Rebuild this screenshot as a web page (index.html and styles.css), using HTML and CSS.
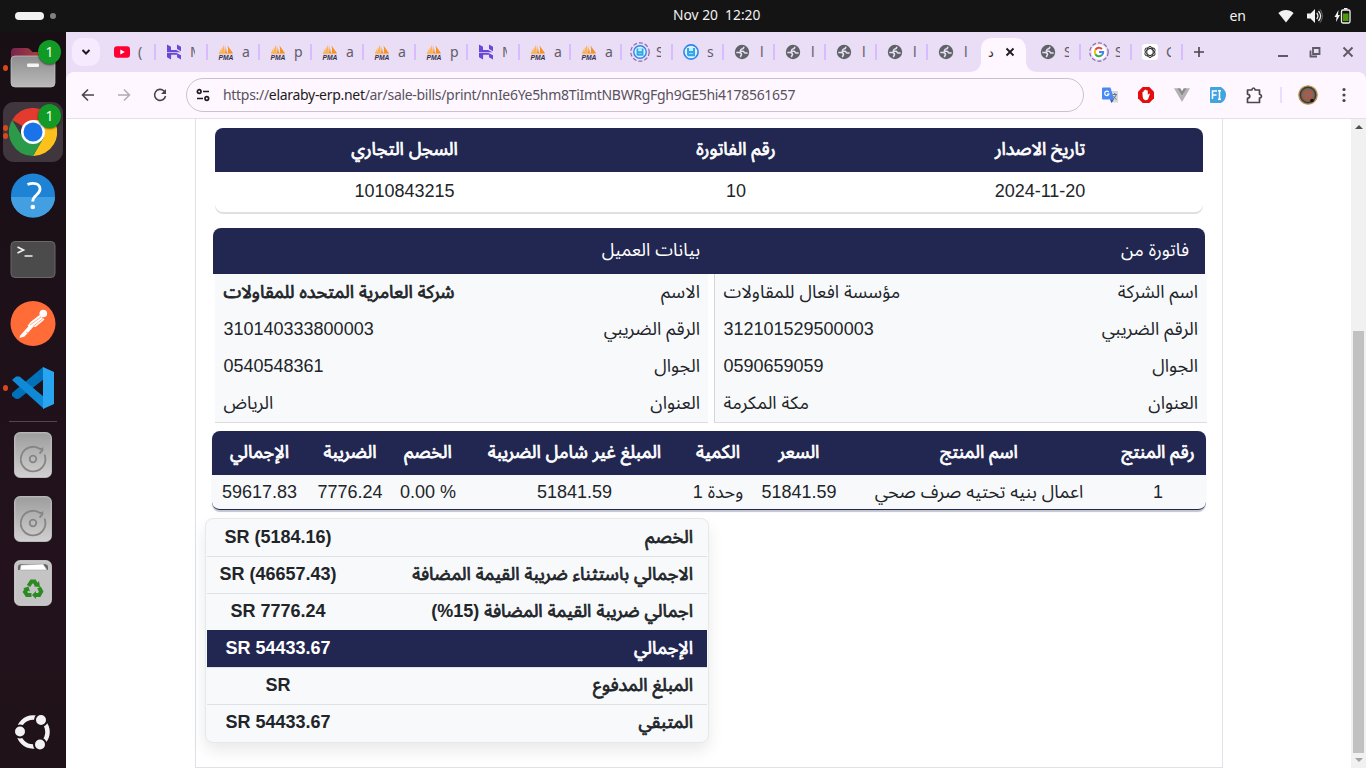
FILE: index.html
```html
<!DOCTYPE html>
<html lang="ar">
<head>
<meta charset="utf-8">
<title>فاتورة</title>
<link rel="stylesheet" href="styles.css">
</head>
<body>
<svg class="defs" width="0" height="0">
  <symbol id="pma" viewBox="0 0 16 16"><path d="M6 1L2 9.500h5zM4 3L.8 9.300h1.400z" fill="#fbb450"/><path d="M7 .5c1 3 .5 6-.2 9h2.400zM9.500 1.500l5.500 7.800-5.500.5c.8-3 .7-5 0-8.300z" fill="#f79025"/><path d="M1 9.800h14" stroke="#e9b070" stroke-width=".8"/><text x="8" y="15.600" text-anchor="middle" textLength="15" lengthAdjust="spacingAndGlyphs" class="pma-text">PMA</text></symbol>
  <symbol id="host" viewBox="0 0 16 16"><path d="M1 .5l4 2.200V6h5.200L14.500 8.300H1zM11 .5l4 2.200V7.300l-4-2.200zM1 9h9.500l4.500 2.300v4.200l-4-2.200v-2.500H5.200L5 15.500 1 13.300z" fill="#6a48d7"/></symbol>
  <symbol id="globe" viewBox="0 0 16 16"><circle cx="8" cy="8" r="7.200" fill="#5f6368"/><path d="M9.800 2.800c0 2-1 2.300-2.500 2.400-.9.100-.3 1.900-1.600 2.100H9c1.100 0 1 1.700 2 1.700h2.600M2.300 8.600h2.900c1.300.2 2.300.6 2.300 1.800 0 1-1 .9-1 2.800" fill="none" stroke="#eaddf6" stroke-width="1.500"/></symbol>
  <symbol id="disk" viewBox="0 0 16 16"><circle cx="8" cy="8" r="7.100" fill="#e3effd" stroke="#2c85ee" stroke-width="1.600"/><path d="M4 4h8v8.200H5L4 11z" fill="#2ca9e6"/><path d="M6 4h4v3H6zM6 9.300h4v.7H6z" fill="#c8ecfa"/></symbol>
  <symbol id="drive" viewBox="0 0 38 46"><rect x=".7" y=".7" width="36.600" height="44.600" rx="5" fill="url(#gd)" stroke="#d4d4d4"/><path d="M30.500 22.500a12.300 12.300 0 1 1-4-5.200l1.800-.8.200 2-3 3" fill="none" stroke="#858585" stroke-width="1.800"/><circle cx="19" cy="27" r="3.300" fill="none" stroke="#858585" stroke-width="1.800"/></symbol>
  <linearGradient id="gd" x2="0" y2="1"><stop stop-color="#9d9d9d"/><stop offset="1" stop-color="#d0d0d0"/></linearGradient>
  <linearGradient id="gf" x2="0" y2="1"><stop stop-color="#8e8e8e"/><stop offset="1" stop-color="#bababa"/></linearGradient>
  <linearGradient id="gh" x2="1"><stop stop-color="#77244f"/><stop offset="1" stop-color="#c34c35"/></linearGradient>
</svg>
<header class="topbar">
  <span class="pill"></span><span class="dot"></span>
  <span class="clock">Nov 20&nbsp; 12:20</span>
  <span class="lang">en</span>
  <svg class="wifi" width="16" height="14" viewBox="0 0 16 14"><path d="M8 13.500L.4 4C4.500-.1 11.500-.1 15.600 4z" fill="#f2f2f2"/></svg>
  <svg class="vol" width="17" height="16" viewBox="0 0 17 16"><path d="M1 5.500h3.500L9 1v14l-4.500-4.500H1z" fill="#f2f2f2"/><path d="M10.700 5c1.500 1.800 1.500 4.200 0 6M12.500 3c2.500 3 2.500 7 0 10" fill="none" stroke="#f2f2f2" stroke-width="1.200"/><path d="M14 1.300c3 4 3 9.400 0 13.400" fill="none" stroke="#777"/></svg>
  <svg class="bat" width="17" height="16" viewBox="0 0 17 16"><path d="M4.500 2L.5 9h2l-.5 5 4-7H4z" fill="#f2f2f2"/><rect x="7.500" y="2" width="8.500" height="13" rx="1.500" fill="#141414" stroke="#f2f2f2" stroke-width="1.300"/><path d="M10 .7h3.500" stroke="#f2f2f2" stroke-width="1.400"/><path d="M9 5.500h5.500V13H9z" fill="#4e9a06"/></svg>
</header>
<div class="main">
<nav class="dock">
  <div class="app"><i class="run"></i><svg width="46" height="46" viewBox="0 0 46 46"><path d="M1 30V7q0-4 4-4h12q2 0 3.500 2l2 2H40q4 0 4 4v20z" fill="url(#gh)"/><path d="M1 15q0-4 4-4h36q4 0 4 4v23q0 4-4 4H5q-4 0-4-4z" fill="url(#gf)" stroke="#c5c5c5" stroke-width=".7"/><rect x="17" y="18.500" width="12" height="3.500" rx="1.200" fill="#f5f5f5"/></svg><b class="badge">1</b></div>
  <div class="app active"><i class="run two"></i><svg width="48" height="48" viewBox="0 0 48 48"><path d="M24 24L3.200 12A24 24 0 0 1 44.800 12z" fill="#e33b2e"/><path d="M24 12h21A24 24 0 0 1 24 48L35 29z" fill="#fcc21b"/><path d="M3.200 12L14 30q5 8 21-1L24 48A24 24 0 0 1 3.200 12z" fill="#2b9a49"/><circle cx="24" cy="24" r="12" fill="#fff"/><circle cx="24" cy="24" r="9.500" fill="#1a73e8"/></svg><b class="badge">1</b></div>
  <div class="app"><svg width="46" height="46" viewBox="0 0 46 46"><circle cx="23" cy="22.500" r="22" fill="#1f83d5"/><path d="M1 24h44a22 20.500 0 0 1-44 0" fill="#42a0e2"/><path d="M17.500 11.500c6-2.500 12.500-1 12.500 4.500 0 6-7.300 6-7.300 12.500" fill="none" stroke="#fff" stroke-width="2.800"/><circle cx="22.800" cy="34" r="2.300" fill="#fff"/></svg></div>
  <div class="app"><svg width="46" height="46" viewBox="0 0 46 46"><rect x="1" y="4.500" width="44" height="36" rx="4" fill="#4b4b4b" stroke="#686868"/><path d="M7.500 10l6 3-6 3M14.500 19h8" fill="none" stroke="#f1f1f1" stroke-width="1.700"/></svg></div>
  <div class="app"><svg width="46" height="46" viewBox="0 0 46 46"><circle cx="23" cy="22.500" r="22.500" fill="#ff6c37"/><circle cx="33.300" cy="12.500" r="3.800" fill="#fff"/><path d="M29.500 14l5 4.500-9 7.500-8-1 3-4z" fill="#fff"/><path d="M25 24L14.500 35.500l-5 1.500.5-2.200L20.500 23z" fill="#fff"/><path d="M20 24l11-8M23 25.500l10-8M16 31l3 1" stroke="#ff9a75" stroke-width=".8"/></svg></div>
  <div class="app"><i class="run"></i><svg width="44" height="44" viewBox="0 0 44 44"><path d="M32 1L1 27v3l4 3 3-.2L33 13z" fill="#0071b8"/><path d="M1 14l4-3.500 3.500.1L33 31v12z" fill="#108ad6"/><path d="M32 1l11 5v32l-11 5z" fill="#29a4f1"/></svg></div>
  <hr>
  <div class="app"><svg width="38" height="46"><use href="#drive"/></svg></div>
  <div class="app"><svg width="38" height="46"><use href="#drive"/></svg></div>
  <div class="app"><svg width="38" height="46" viewBox="0 0 38 46"><rect x=".7" y=".7" width="36.600" height="44.600" rx="5" fill="#c4c4c4" stroke="#ddd"/><path d="M4 10V7q0-3 4-3h22q4 0 4 3v3z" fill="#666"/><path d="M6 10l1-5 22-1 4 6z" fill="#fff" stroke="#aaa" stroke-width=".6"/><g fill="none" stroke="#2b8a20" stroke-width="4"><path d="M14.500 26l3-4.500h3l2 3.500"/><path d="M25 27.500l2.200 4-2 3.500h-4"/><path d="M17.500 35h-4.500l-2-3 2-3.500"/></g><path d="M20 26.500l6 .5-1-6zM22 31v8l-4-4zM9 28.500l5.500-2 1.500 5z" fill="#2b8a20"/></svg></div>
  <div class="launcher"><svg width="38" height="38" viewBox="0 0 38 38"><circle cx="19" cy="19" r="14.500" fill="none" stroke="#f2f2f2" stroke-width="4.500"/><g fill="#f2f2f2" stroke="#20111a" stroke-width="2"><circle cx="6" cy="18.500" r="6"/><circle cx="27" cy="7" r="6"/><circle cx="26" cy="31.500" r="6"/></g></svg></div>
</nav>
<section class="browser">
<div class="tabs">
  <div class="search"><svg width="10" height="8" viewBox="0 0 10 8"><path d="M1.500 2L5 5.500 8.500 2" fill="none" stroke="#1d1b20" stroke-width="2"/></svg></div>
  <div class="tab w"><svg width="16" height="16" viewBox="0 0 16 16"><rect y="2.300" width="16" height="11.400" rx="3" fill="#f03"/><path d="M6.300 5.500v5l4.500-2.500z" fill="#fff"/></svg><span>(</span></div>
  <div class="tab w"><svg width="16" height="16"><use href="#host"/></svg><span class="cut">M</span></div>
  <div class="tab w"><svg width="16" height="16"><use href="#pma"/></svg><span>a</span></div>
  <div class="tab w"><svg width="16" height="16"><use href="#pma"/></svg><span>p</span></div>
  <div class="tab w"><svg width="16" height="16"><use href="#pma"/></svg><span>a</span></div>
  <div class="tab w"><svg width="16" height="16"><use href="#pma"/></svg><span>a</span></div>
  <div class="tab w"><svg width="16" height="16"><use href="#pma"/></svg><span>p</span></div>
  <div class="tab w"><svg width="16" height="16"><use href="#host"/></svg><span class="cut">M</span></div>
  <div class="tab"><svg width="16" height="16"><use href="#pma"/></svg><span>a</span></div>
  <div class="tab"><svg width="16" height="16"><use href="#pma"/></svg><span>a</span></div>
  <div class="tab"><svg class="big" width="20" height="20" viewBox="0 0 20 20"><circle cx="10" cy="10" r="9.200" fill="none" stroke="#8a6aa8" stroke-width="1.200" stroke-dasharray="4 2"/><use href="#disk" x="3" y="3" width="14" height="14"/></svg><span class="cut">S</span></div>
  <div class="tab"><svg width="16" height="16"><use href="#disk"/></svg><span>s</span></div>
  <div class="tab"><svg width="16" height="16"><use href="#globe"/></svg><span class="thin">l</span></div>
  <div class="tab"><svg width="16" height="16"><use href="#globe"/></svg><span class="thin">l</span></div>
  <div class="tab"><svg width="16" height="16"><use href="#globe"/></svg><span class="thin">l</span></div>
  <div class="tab"><svg width="16" height="16"><use href="#globe"/></svg><span class="thin">l</span></div>
  <div class="tab last"><svg width="16" height="16"><use href="#globe"/></svg><span class="thin">l</span></div>
  <div class="current"><svg class="shape" width="69" height="34" viewBox="0 0 69 34"><path d="M0 34q12 0 12-12V12Q12 0 24 0h21q12 0 12 12v10q0 12 12 12z" fill="#fef7ff"/></svg><span>د</span><svg width="10" height="10" viewBox="0 0 10 10"><path d="M1.500 1.500l7 7M8.500 1.500l-7 7" stroke="#1d1b20" stroke-width="1.800"/></svg></div>
  <div class="tab"><svg width="16" height="16"><use href="#globe"/></svg><span class="cut">S</span></div>
  <div class="tab"><svg class="big" width="20" height="20" viewBox="0 0 20 20"><circle cx="10" cy="10" r="9.200" fill="none" stroke="#8a6aa8" stroke-width="1.200" stroke-dasharray="4 2"/><circle cx="10" cy="10" r="7.500" fill="#fff"/><g fill="none" stroke-width="2"><path d="M13 7A4.200 4.200 0 0 0 6.400 7.800" stroke="#ea4335"/><path d="M6.400 7.800a4.200 4.200 0 0 0 0 4.400" stroke="#fbbc05"/><path d="M6.400 12.200a4.200 4.200 0 0 0 6.500.9" stroke="#34a853"/><path d="M12.900 13.100A4 4 0 0 0 14.200 10H10" stroke="#4285f4"/></g></svg><span class="cut">S</span></div>
  <div class="tab"><svg width="16" height="16" viewBox="0 0 16 16"><rect width="16" height="16" rx="3" fill="#fff"/><g fill="none" stroke="#222" stroke-width=".9"><ellipse cx="8" cy="8" rx="3.200" ry="5.600"/><ellipse cx="8" cy="8" rx="3.200" ry="5.600" transform="rotate(60 8 8)"/><ellipse cx="8" cy="8" rx="3.200" ry="5.600" transform="rotate(120 8 8)"/></g></svg><span class="cut">C</span></div>
  <svg class="plus" width="12" height="12" viewBox="0 0 12 12"><path d="M6 1v10M1 6h10" stroke="#49454e" stroke-width="1.600"/></svg>
  <div class="win">
    <svg width="10" height="12" viewBox="0 0 10 12"><path d="M0 10h10" stroke="#5f5a66" stroke-width="2"/></svg>
    <svg width="12" height="12" viewBox="0 0 12 12"><path d="M4 2h6.500v6H4zM1.500 4.500v6H8" fill="none" stroke="#5f5a66" stroke-width="1.800"/></svg>
    <svg width="12" height="12" viewBox="0 0 12 12"><path d="M1.500 1.500l9 9M10.500 1.500l-9 9" stroke="#5f5a66" stroke-width="1.900"/></svg>
  </div>
</div>
<div class="toolbar">
  <svg class="back" width="14" height="14" viewBox="0 0 14 14"><path d="M13 7H2M7 1.500L1.500 7 7 12.500" fill="none" stroke="#49454e" stroke-width="1.600"/></svg>
  <svg class="fwd" width="14" height="14" viewBox="0 0 14 14"><path d="M1 7h11M7 1.500L12.500 7 7 12.500" fill="none" stroke="#b0abb5" stroke-width="1.500"/></svg>
  <svg class="reload" width="14" height="14" viewBox="0 0 14 14"><path d="M12.500 8A5.500 5.500 0 1 1 11 3l1.500 1.500" fill="none" stroke="#49454e" stroke-width="1.600"/><path d="M13 1v5H8z" fill="#49454e"/></svg>
  <div class="omni"><svg width="14" height="14" viewBox="0 0 14 14"><g fill="none" stroke="#1d1b20" stroke-width="1.700"><circle cx="3.200" cy="3.500" r="1.800"/><path d="M7 3.500h6M1 10.500h6"/><circle cx="10.800" cy="10.500" r="1.800"/></g></svg><span class="url">https://<em>elaraby-erp.net</em>/ar/sale-bills/print/nnIe6Ye5hm8TiImtNBWRgFgh9GE5hi4178561657</span></div>
  <div class="exts">
    <svg width="16" height="16" viewBox="0 0 16 16"><path d="M6 4h9q1 0 1 1v10.500H9z" fill="#d5d8dc"/><path d="M0 1.500Q0 .5 1 .5h7.500L12 12.500H1q-1 0-1-1z" fill="#4889f4"/><path d="M8 12.500h4L9.500 16z" fill="#3158c4"/><path d="M6.800 5.200A2.200 2.200 0 1 0 7 7H5" fill="none" stroke="#fff" stroke-width="1.200"/><path d="M10.500 7.500H15M12.700 6v1.500M14 8q-1 3-3 4M11.500 9q1 2.500 3 3.500" fill="none" stroke="#65798d"/></svg>
    <svg width="16" height="16" viewBox="0 0 16 16"><path d="M4.700 0h6.600L16 4.700v6.600L11.300 16H4.700L0 11.300V4.700z" fill="#e40d0d"/><path d="M4.500 8V5q.8-1 1.300 0V3.500q.8-1 1.300 0V3q.8-1 1.400 0v.8q.8-1 1.300 0V8l1.300-1.500q1 0 .6 1L10 12.300q-3 2-5-.8z" fill="#fff"/></svg>
    <svg width="16" height="16" viewBox="0 0 16 16"><path d="M0 1.200h3.500L8 9l4.500-7.800H16L8 15z" fill="#b3b3b3"/><path d="M3.300 1.200h3L8 4.200l1.700-3h3L8 9z" fill="#8b8b8b"/></svg>
    <svg width="16" height="16" viewBox="0 0 16 16"><path d="M1 0h10q5 3 5 8t-5 8H1q-1 0-1-1V1q0-1 1-1z" fill="#41a3df"/><path d="M2.500 12V4h4.500M2.500 8h4M8 3.500q1.500 0 1.500 1.500v6q0 1.500-1.500 1.500M11 3.500q-1.500 0-1.500 1.500v6q0 1.500 1.500 1.500" fill="none" stroke="#fff" stroke-width="1.500"/></svg>
    <svg class="puz" width="17" height="17" viewBox="0 0 17 17"><path d="M1.500 3h4.300q.5-2 1.700-2t1.700 2h4.300v4.300q2 .5 2 1.900t-2 1.900v4.400h-12v-4.200q2.300-.5 2.300-2.100T1.500 7.100z" fill="none" stroke="#49454e" stroke-width="1.700" stroke-linejoin="round"/></svg>
  </div>
  <i class="vsep"></i>
  <svg class="avatar" width="20" height="20" viewBox="0 0 20 20"><circle cx="10" cy="10" r="9.300" fill="#6d6864" stroke="#c9993f" stroke-width="1.100"/><circle cx="10" cy="10" r="7.600" fill="none" stroke="#3d3736" stroke-width="1.300"/><circle cx="10" cy="10" r="5.200" fill="#b5543f"/><path d="M7 7l6 6M13 7l-6 6M10 5v10M5 10h10" stroke="#7d6f67" stroke-width=".9"/><circle cx="14" cy="15.500" r="1.800" fill="#191412"/></svg>
  <svg class="more" width="4" height="16" viewBox="0 0 4 16"><g fill="#49454e"><circle cx="2" cy="2.500" r="1.600"/><circle cx="2" cy="8" r="1.600"/><circle cx="2" cy="13.500" r="1.600"/></g></svg>
</div>
<div class="view">
<main class="page" dir="rtl">
<div class="invoice">
  <div class="info">
    <div class="head"><span>تاريخ الاصدار</span><span>رقم الفاتورة</span><span>السجل التجاري</span></div>
    <div class="line"><span>2024-11-20</span><span>10</span><span>1010843215</span></div>
  </div>
  <div class="parties-head"><span>فاتورة من</span><span>بيانات العميل</span></div>
  <div class="parties">
    <div class="party from">
      <p><span>اسم الشركة</span><span>مؤسسة افعال للمقاولات</span></p>
      <p><span>الرقم الضريبي</span><span>312101529500003</span></p>
      <p><span>الجوال</span><span>0590659059</span></p>
      <p><span>العنوان</span><span>مكة المكرمة</span></p>
    </div>
    <div class="party">
      <p><span>الاسم</span><strong>شركة العامرية المتحده للمقاولات</strong></p>
      <p><span>الرقم الضريبي</span><span>310140333800003</span></p>
      <p><span>الجوال</span><span>0540548361</span></p>
      <p><span>العنوان</span><span>الرياض</span></p>
    </div>
  </div>
  <div class="items">
    <div class="ihead"><span>رقم المنتج</span><span>اسم المنتج</span><span>السعر</span><span>الكمية</span><span>المبلغ غير شامل الضريبة</span><span>الخصم</span><span>الضريبة</span><span>الإجمالي</span></div>
    <div class="irow"><span>1</span><span>اعمال بنيه تحتيه صرف صحي</span><span>51841.59</span><span>وحدة 1</span><span>51841.59</span><span dir="ltr">0.00 %</span><span>7776.24</span><span>59617.83</span></div>
  </div>
  <div class="totals">
    <div class="rows">
    <p><span>الخصم</span><bdi dir="ltr">SR (5184.16)</bdi></p>
    <p><span>الاجمالي باستثناء ضريبة القيمة المضافة</span><bdi dir="ltr">SR (46657.43)</bdi></p>
    <p><span>اجمالي ضريبة القيمة المضافة <b>(15%)</b></span><bdi dir="ltr">SR 7776.24</bdi></p>
    <p class="grand"><span>الإجمالي</span><bdi dir="ltr">SR 54433.67</bdi></p>
    <p><span>المبلغ المدفوع</span><bdi dir="ltr">SR</bdi></p>
    <p><span>المتبقي</span><bdi dir="ltr">SR 54433.67</bdi></p>
    </div>
  </div>
</div>
</main>
<aside class="scroll"><i class="up"></i><i class="thumb"></i><i class="down"></i></aside>
</div>
</section>
</div>
</body>
</html>
```

FILE: styles.css
```css
* { box-sizing: border-box; }
body { margin: 0; width: 1366px; height: 768px; overflow: hidden; display: flex; flex-direction: column; background: #fff; font-family: "Noto Sans", sans-serif; }
svg { display: block; flex: none; }
.defs { position: absolute; }
p { margin: 0; }

.topbar { height: 32px; flex: none; background: #141414; color: #f2f2f2; display: flex; align-items: center; font-size: 13.8px; padding-right: 15px; }
.pill { width: 29px; height: 8px; border-radius: 4px; background: #f2f2f2; margin-left: 15px; }
.dot { width: 6px; height: 6px; border-radius: 50%; background: #808080; margin-left: 6px; }
.clock { margin-left: 617px; width: 92px; white-space: nowrap; line-height: 20px; padding-bottom: 2px; }
.lang { margin-left: auto; font-size: 14px; line-height: 20px; }
.wifi { margin-left: 32px; }
.vol { margin-left: 12px; }
.bat { margin-left: 11px; }

.main { flex: 1; display: flex; min-height: 0; }
.dock { width: 66px; flex: none; background: linear-gradient(#180f15, #20111a 55%, #23121d 75%, #1f1218); display: flex; flex-direction: column; align-items: center; padding-top: 6px; }
.app { width: 60px; height: 60px; margin-bottom: 4px; flex: none; border-radius: 11px; display: flex; align-items: center; justify-content: center; position: relative; }
.app.active { background: #40363e; }
.dock hr { width: 48px; height: 1px; border: 0; background: #514750; margin: -1px 0 3px; flex: none; }
.run { position: absolute; left: 0; top: 27px; width: 5px; height: 6px; border-radius: 50%; background: #d8481c; }
.run.two { top: 23px; box-shadow: 0 8px #d8481c; }
.badge { position: absolute; left: 35px; top: 2px; width: 23px; height: 24px; border-radius: 50%; background: #119a26; color: #f4ffe0; font: 14px/24px "Noto Sans", sans-serif; text-align: center; box-shadow: 0 1px 2px #0008; }
.launcher { margin-top: auto; margin-bottom: 17px; }

.browser { flex: 1; display: flex; flex-direction: column; min-width: 0; background: #eaddf6; }
.tabs { height: 40px; flex: none; display: flex; align-items: center; padding-left: 6px; }
.search { width: 28px; height: 28px; border-radius: 10px; background: #f6ebfe; display: flex; align-items: center; justify-content: center; margin-right: 4px; }
.tab { width: 51px; height: 16px; display: flex; align-items: center; padding-left: 10px; border-right: 2px solid #d9bcff; flex: none; font-size: 14px; line-height: 16px; color: #625b6b; }
.tab.w { width: 52px; }
.tab.last { border-color: transparent; }
.tab span { width: 8px; margin-left: 8px; white-space: nowrap; }
.tab .cut { width: 5px; overflow: hidden; }
.tab .thin { padding-left: 2px; }
.tab .big { margin: 0 -2px; }
.pma-text { font: italic bold 6.500px "Liberation Sans", sans-serif; fill: #33334d; }
.current { width: 51px; height: 28px; flex: none; position: relative; display: flex; align-items: center; padding-left: 9px; font: 13px "DejaVu Sans", sans-serif; color: #333; }
.current .shape { position: absolute; left: -10px; top: 0; }
.current span { position: relative; width: 7px; margin-right: 10px; }
.current > svg:last-child { position: relative; }
.plus { margin-left: 10px; }
.win { margin-left: auto; display: flex; align-items: center; gap: 21px; padding-right: 12px; }

.toolbar { height: 47px; flex: none; background: #fef7ff; border-bottom: 1px solid #e4dfe8; border-radius: 8px 8px 0 0; display: flex; align-items: center; padding-left: 15px; }
.fwd { margin-left: 22px; }
.reload { margin-left: 22px; }
.omni { width: 898px; height: 34px; margin-left: 19px; border: 1px solid #c8c2cc; border-radius: 17px; display: flex; align-items: center; padding-left: 9px; font-size: 14px; color: #58525e; white-space: nowrap; flex: none; }
.url { margin-left: 13px; letter-spacing: -.302px; padding-bottom: 2px; }
.url em { font-style: normal; color: #1d1b20; }
.exts { display: flex; gap: 20px; align-items: center; margin-left: 18px; }
.vsep { width: 2px; height: 16px; background: #ecdcff; margin-left: 17px; }
.avatar { margin-left: 16px; }
.more { margin-left: 24px; }

.view { flex: 1; display: flex; min-height: 0; background: #fff; }
.page { width: 1285px; flex: none; padding-right: 128px; display: flex; }
.invoice { width: 1028px; height: 649px; flex: none; border: 1px solid #dee2e6; border-top: 0; padding-top: 9px; font: 18px/24px "Liberation Sans", "Noto Sans Arabic", "Noto Sans", sans-serif; color: #212529; }
.info { width: 988px; height: 84px; margin-right: 19px; border-radius: 8px; box-shadow: 0 2px 0 #dfe0e1; }
.head, .line { display: grid; grid-template-columns: 326px 282px 381px; align-items: center; text-align: center; }
.head, .parties-head, .ihead, .grand { background: #222751; color: #fff; }
.head { height: 44px; border-radius: 8px 8px 0 0; padding-bottom: 2px; }
.line { height: 38px; }

/* Arabic headings are emboldened by a stroke so they keep the regular glyph widths */
.head span, .ihead span, .party strong, .totals p > span { font-weight: normal; -webkit-text-stroke: .75px currentColor; }
.totals p b { -webkit-text-stroke: 0; }

.parties-head { width: 992px; height: 46px; margin: 16px 17px 0 0; display: grid; grid-template-columns: 489px 487px; align-items: center; padding: 0 16px 2px 0; border-radius: 8px 8px 0 0; }
.parties { display: flex; gap: 6px; margin-right: 15px; }
.party { width: 493px; height: 149px; background: #f8f9fb; border-bottom: 1px solid #dadde1; padding: 0 8px; }
.party.from { border-left: 1px solid #d3d5d9; padding-right: 9px; }
.party p { height: 37px; padding: 0 0 2px .5px; display: flex; justify-content: space-between; align-items: center; }
.items { width: 994px; margin: 8px 16px 0 0; height: 79px; border-radius: 8px; background: #f8f9fb; border-bottom: 1px solid #222751; box-shadow: 0 2px 1px #c4c5cc; }
.ihead, .irow { display: grid; grid-template-columns: 96px 262px 98px 64px 223px 70px 86px 95px; align-items: center; text-align: center; white-space: nowrap; }
.ihead { height: 44px; border-radius: 8px 8px 0 0; padding-bottom: 2px; }
.irow { height: 34px; }
.totals { width: 504px; height: 225px; margin: 8px auto 0 9px; border: 1px solid #e6e8ea; border-radius: 8px; background: #f8f9fb; box-shadow: 0 8px 16px #00000016; font-weight: bold; padding: 0 1px; }
.totals p { height: 37px; padding: 0 14px 2px 0; display: flex; align-items: center; justify-content: space-between; border-top: 1px solid #dee2e6; white-space: nowrap; }
.totals p:first-child { border-top: 0; }
.totals p.grand { border-color: #222751; }
.totals bdi { width: 142px; text-align: center; }

.scroll { width: 15px; background: #f1f1f1; display: flex; flex-direction: column; align-items: center; }
.scroll i { flex: none; }
.scroll .up, .scroll .down { width: 8px; height: 8px; border: 4px solid transparent; }
.scroll .up { border-bottom-color: #505050; margin-top: 2px; }
.thumb { width: 11px; height: 422px; background: #c1c1c1; margin-top: 202px; }
.scroll .down { border-top-color: #a3a3a3; margin-top: 5px; }
```
